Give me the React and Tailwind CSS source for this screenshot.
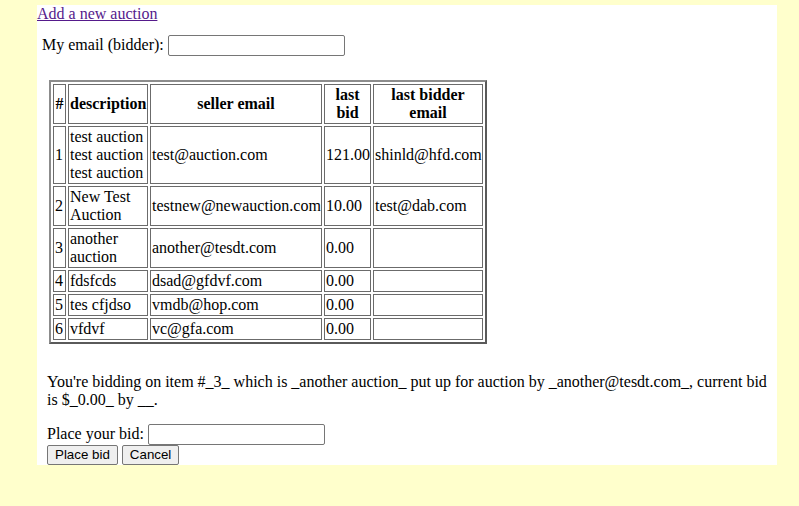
const rows = [
  { id: 1, desc: "test auction test auction test auction", seller: "test@auction.com", bid: "121.00", bidder: "shinld@hfd.com" },
  { id: 2, desc: "New Test Auction", seller: "testnew@newauction.com", bid: "10.00", bidder: "test@dab.com" },
  { id: 3, desc: "another auction", seller: "another@tesdt.com", bid: "0.00", bidder: "" },
  { id: 4, desc: "fdsfcds", seller: "dsad@gfdvf.com", bid: "0.00", bidder: "" },
  { id: 5, desc: "tes cfjdso", seller: "vmdb@hop.com", bid: "0.00", bidder: "" },
  { id: 6, desc: "vfdvf", seller: "vc@gfa.com", bid: "0.00", bidder: "" },
];

const cell = "border border-[#6b6b6b] p-[1px] align-middle";
const th = cell + " font-bold text-center";
const btn =
  "h-[20px] rounded-[2px] border border-[#767676] bg-[#efefef] px-[7px] font-['Liberation_Sans',sans-serif] text-[13.33px] leading-[16px] text-black";

const App = () => {
  return (
    <div className="min-h-screen bg-[#ffffcc] pt-[5px] pl-[37px] font-['Liberation_Serif',serif] text-[16px] leading-[18px] text-black">
      <div className="w-[740px] bg-white">
        <div>
          <a href="#" className="text-[#551a8b] underline">
            Add a new auction
          </a>
        </div>

        <div className="mt-[11px] flex h-[22px] items-center gap-[4px] pl-[5px]">
          <span>My email (bidder):</span>
          <input
            type="text"
            className="h-[21px] w-[177px] rounded-[2px] border border-[#767676] bg-white px-[2px]"
          />
        </div>

        <table className="mt-[24px] ml-[12px] w-[438px] table-fixed border-separate border-spacing-[2px] border-2 border-[#8c8c8c] border-b-[#5a5a5a] border-r-[#5a5a5a]">
          <thead>
            <tr>
              <th className={th + " w-[13px]"}>#</th>
              <th className={th + " w-[80px]"}>description</th>
              <th className={th + " w-[172px]"}>seller email</th>
              <th className={th + " w-[47px]"}>last bid</th>
              <th className={th + " w-[110px]"}>last bidder email</th>
            </tr>
          </thead>
          <tbody>
            {rows.map((r) => (
              <tr key={r.id}>
                <td className={cell}>{r.id}</td>
                <td className={cell}>{r.desc}</td>
                <td className={cell + " whitespace-nowrap"}>{r.seller}</td>
                <td className={cell + " whitespace-nowrap"}>{r.bid}</td>
                <td className={cell + " whitespace-nowrap"}>{r.bidder}</td>
              </tr>
            ))}
          </tbody>
        </table>

        <p className="mt-[29px] pl-[10px]">
          You're bidding on item #_3_ which is _another auction_ put up for auction by _another@tesdt.com_, current bid is $_0.00_ by __.
        </p>

        <div className="mt-[14px] flex h-[22px] items-center gap-[4px] pl-[10px]">
          <span>Place your bid:</span>
          <input
            type="text"
            className="h-[21px] w-[177px] rounded-[2px] border border-[#767676] bg-white px-[2px]"
          />
        </div>

        <div className="flex gap-[4px] pl-[10px]">
          <button className={btn}>Place bid</button>
          <button className={btn}>Cancel</button>
        </div>
      </div>
    </div>
  );
};

export default App;
